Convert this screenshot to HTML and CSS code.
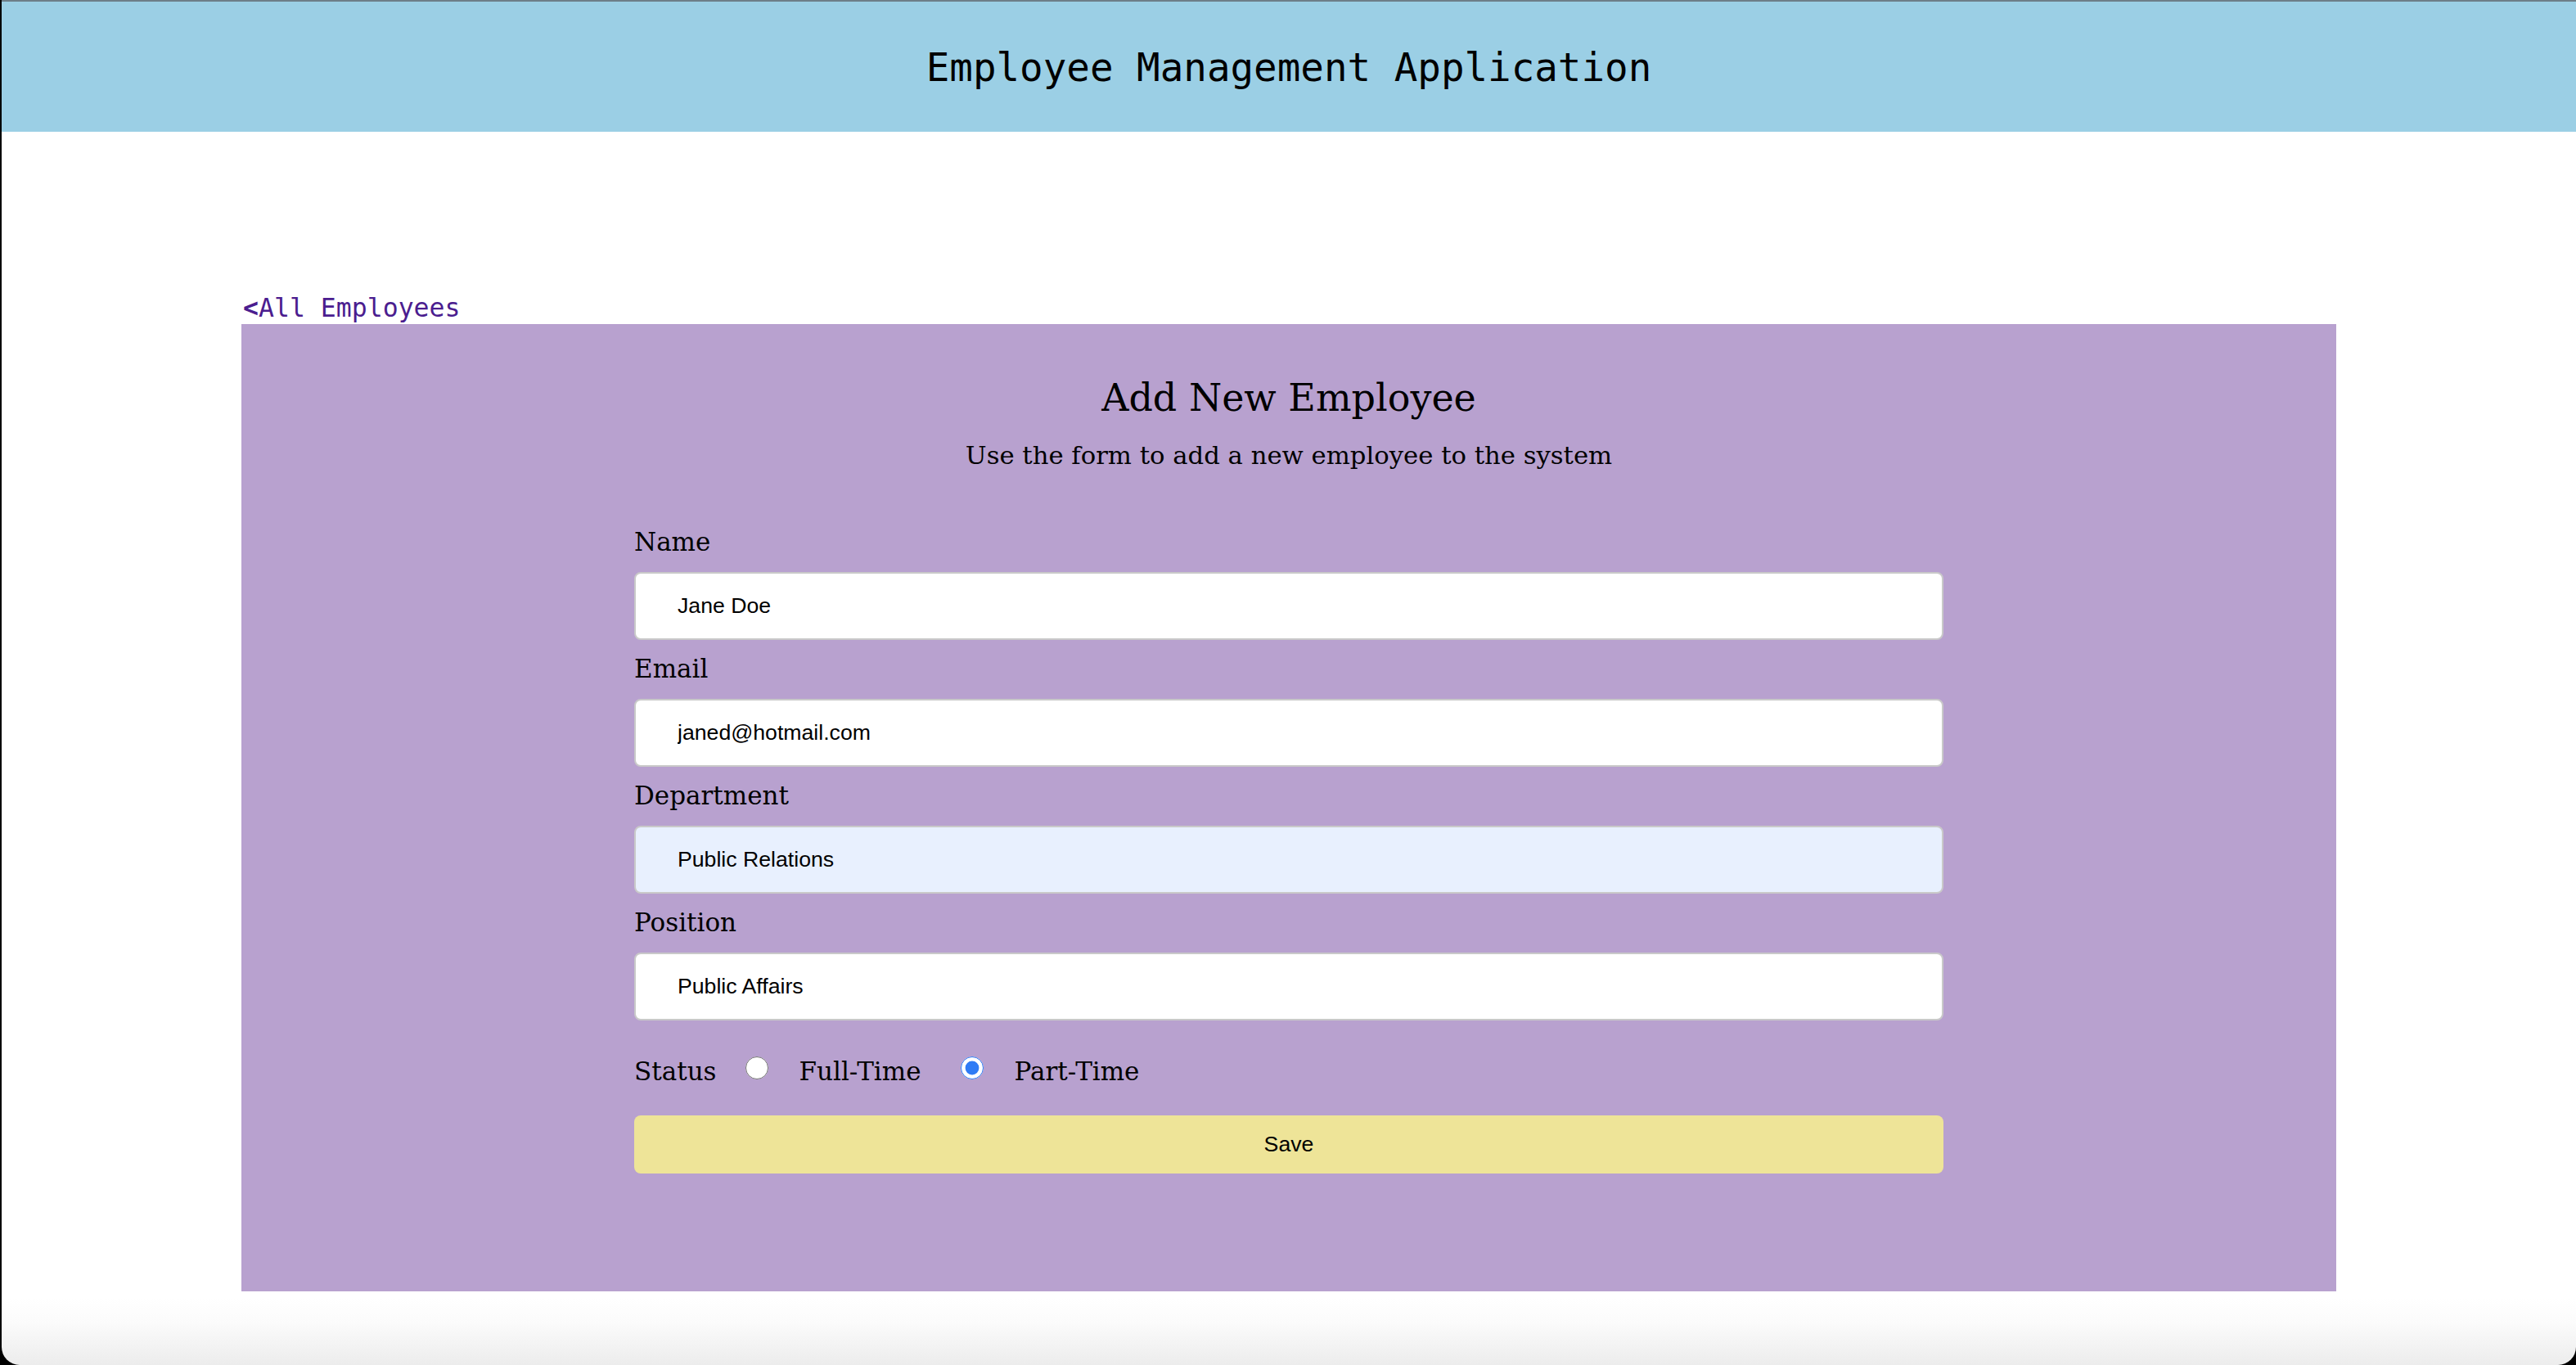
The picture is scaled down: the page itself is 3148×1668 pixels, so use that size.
FILE: index.html
```html
<!DOCTYPE html>
<html lang="en">
<head>
<meta charset="utf-8">
<title>Employee Management Application</title>
<link rel="stylesheet" href="styles.css">
</head>
<body>
<div class="window">
  <header class="app-header">
    <h1 class="app-title">Employee Management Application</h1>
  </header>
  <main class="content">
    <a class="back-link" href="#"><span class="back-chevron">&lt;</span>All Employees</a>
    <section class="card">
      <h2 class="card-title">Add New Employee</h2>
      <p class="card-subtitle">Use the form to add a new employee to the system</p>
      <form class="employee-form">
        <div class="field">
          <label class="field-label" for="name">Name</label>
          <input class="field-input" id="name" type="text" value="Jane Doe">
        </div>
        <div class="field">
          <label class="field-label" for="email">Email</label>
          <input class="field-input" id="email" type="text" value="janed@hotmail.com">
        </div>
        <div class="field">
          <label class="field-label" for="department">Department</label>
          <input class="field-input field-input--autofill" id="department" type="text" value="Public Relations">
        </div>
        <div class="field">
          <label class="field-label" for="position">Position</label>
          <input class="field-input" id="position" type="text" value="Public Affairs">
        </div>
        <div class="status-row">
          <span class="status-label">Status</span>
          <input class="status-radio" type="radio" name="status" id="full">
          <label class="status-option" for="full">Full-Time</label>
          <input class="status-radio" type="radio" name="status" id="part" checked>
          <label class="status-option" for="part">Part-Time</label>
        </div>
        <button class="save-button" type="button">Save</button>
      </form>
    </section>
  </main>
</div>
</body>
</html>
```
FILE: styles.css
```css
html, body {
  margin: 0;
  padding: 0;
}

body {
  background: #000;
  width: 3148px;
  height: 1668px;
  overflow: hidden;
}

.window {
  margin-left: 2px;
  height: 1668px;
  box-sizing: border-box;
  border-top: 2px solid #6d7e88;
  border-radius: 0 0 22px 22px;
  background: linear-gradient(to bottom, #ffffff 0, #ffffff 1585px, #fbfbfb 1615px, #ececec 1666px);
  overflow: hidden;
}

.app-header {
  height: 159px;
  background: #9bcfe5;
  display: flex;
  align-items: center;
  justify-content: center;
}

.app-title {
  margin: 0;
  font-family: "DejaVu Sans Mono", "Liberation Mono", monospace;
  font-weight: normal;
  font-size: 47.5px;
  line-height: 56px;
  color: #000;
  padding-top: 2px;
}

.content {
  width: 2560px;
  margin: 0 auto;
  padding-top: 199px;
}

.back-link {
  display: block;
  font-family: "DejaVu Sans Mono", "Liberation Mono", monospace;
  font-size: 31.5px;
  line-height: 32px;
  padding: 0 0 4px 2px;
  color: #4b1d8f;
  text-decoration: none;
}

.back-chevron {
  font-weight: bold;
}

.card {
  background: #b8a1cf;
  height: 1182px;
  box-sizing: border-box;
  padding: 62px 0 0;
  font-family: "DejaVu Serif", "Liberation Serif", serif;
  color: #000;
}

.card-title {
  margin: 0;
  text-align: center;
  font-weight: normal;
  font-size: 46px;
  line-height: 56px;
}

.card-subtitle {
  margin: 23px 0 0;
  text-align: center;
  font-size: 30.7px;
  line-height: 40px;
}

.employee-form {
  width: 1600px;
  margin: 65px auto 0;
}

.field {
  display: flex;
  flex-direction: column;
  margin-bottom: 15px;
}

.field-label {
  font-size: 31px;
  line-height: 40px;
  margin-bottom: 17px;
}

.field-input {
  box-sizing: border-box;
  width: 100%;
  height: 83px;
  margin: 0;
  padding: 0 48px 0 51px;
  border: 2px solid #c9c9c9;
  border-radius: 8px;
  background: #ffffff;
  font-family: "Liberation Sans", Arial, sans-serif;
  font-size: 26.67px;
  color: #000;
  outline: none;
}

.field-input--autofill {
  background: #e8f0fe;
}

.status-row {
  display: flex;
  align-items: center;
  height: 40px;
  margin-top: 42px;
  font-size: 31px;
  line-height: 40px;
}

.status-label {
  margin-right: 35px;
}

.status-radio {
  width: 28px;
  height: 28px;
  margin: 0 38px 8px 0;
  accent-color: #2f7bf5;
}

.status-option {
  margin-right: 48px;
}

.save-button {
  display: block;
  box-sizing: border-box;
  width: 100%;
  height: 71px;
  margin-top: 34px;
  border: none;
  border-radius: 8px;
  background: #eee498;
  font-family: "Liberation Sans", Arial, sans-serif;
  font-size: 26.67px;
  color: #000;
}
```
